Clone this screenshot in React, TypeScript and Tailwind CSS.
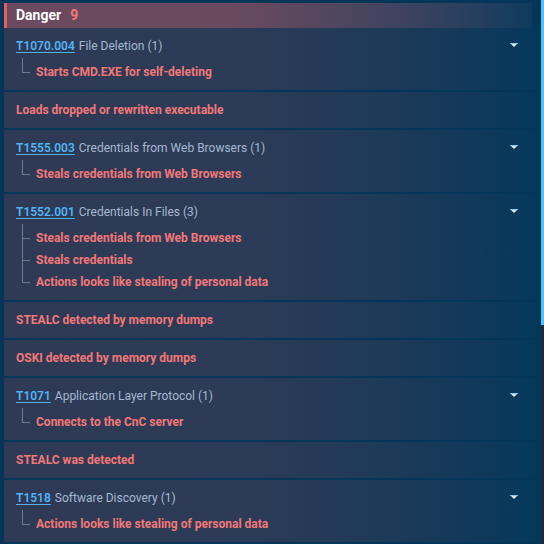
import React from "react";

type Item = {
  id?: string;
  title?: string;
  text?: string;
  subs?: string[];
};

const items: Item[] = [
  { id: "T1070.004", title: "File Deletion (1)", subs: ["Starts CMD.EXE for self-deleting"] },
  { text: "Loads dropped or rewritten executable" },
  { id: "T1555.003", title: "Credentials from Web Browsers (1)", subs: ["Steals credentials from Web Browsers"] },
  {
    id: "T1552.001",
    title: "Credentials In Files (3)",
    subs: ["Steals credentials from Web Browsers", "Steals credentials", "Actions looks like stealing of personal data"],
  },
  { text: "STEALC detected by memory dumps" },
  { text: "OSKI detected by memory dumps" },
  { id: "T1071", title: "Application Layer Protocol (1)", subs: ["Connects to the CnC server"] },
  { text: "STEALC was detected" },
  { id: "T1518", title: "Software Discovery (1)", subs: ["Actions looks like stealing of personal data"] },
];

function Caret() {
  return (
    <svg width="8" height="4" viewBox="0 0 8 4" className="absolute right-[23px] top-[15px]">
      <polygon points="0,0 8,0 4,4" fill="#d8ecf8" />
      <rect x="0" y="0" width="8" height="1" fill="#8fc4e6" />
    </svg>
  );
}

function Row({ item }: { item: Item }) {
  if (!item.subs) {
    return (
      <div className="h-[36px] flex items-center pl-[12px] bg-linear-to-r from-[#2f3a55] via-[#2c3b57] via-45% to-[#03385b]">
        <span className="text-[12px] font-bold text-[#f27878]">{item.text}</span>
      </div>
    );
  }
  return (
    <div className="relative pt-[8px] pb-[7px] pl-[12px] bg-linear-to-r from-[#2f3a55] via-[#2c3b57] via-45% to-[#03385b]">
      <div className="h-[20px] flex items-center text-[12px]">
        <span className="text-[#4fb4f7] font-semibold underline underline-offset-2">{item.id}</span>
        <span className="ml-[4px] text-[#a3b9cf]">{item.title}</span>
      </div>
      <Caret />
      <div className="mt-[5px] ml-[6px]">
        {item.subs.map((s, i) => {
          const last = i === item.subs!.length - 1;
          return (
            <div key={i} className="relative h-[22px] flex items-center pl-[14px]">
              <span
                className={
                  "absolute left-0 w-px bg-[#6b7a8c] " + (last ? "top-[-3px] h-[14px]" : "top-[-3px] h-[25px]")
                }
              />
              <span className="absolute left-0 top-[11px] w-[8px] h-px bg-[#6b7a8c]" />
              <span className="text-[12px] font-bold text-[#f27878]">{s}</span>
            </div>
          );
        })}
      </div>
    </div>
  );
}

export default function App() {
  return (
    <div
      className="w-[544px] h-[544px] bg-[#033659] flex overflow-hidden"
      style={{ fontFamily: "Roboto, 'Liberation Sans', sans-serif" }}
    >
      <div className="flex-1 pl-[4px] pt-[3px] flex flex-col">
        <div className="mr-[9px] h-[25px] flex items-center border-l-[3px] border-[#e8605c] pl-[9px] bg-linear-to-r from-[#6b4a5f] via-[#684a5f] via-45% to-[#0b3b5e]">
          <span className="text-[14px] font-bold text-white">Danger</span>
          <span className="ml-[9px] text-[14px] font-bold text-[#f27878]">9</span>
        </div>
        <div className="flex flex-col gap-[2px]">
          {items.map((it, i) => (
            <Row key={i} item={it} />
          ))}
        </div>
      </div>
      <div className="w-[3px] flex flex-col">
        <div className="h-[325px] bg-[#4fc3f7]" />
        <div className="flex-1 bg-[#1d2b3a]" />
      </div>
    </div>
  );
}
